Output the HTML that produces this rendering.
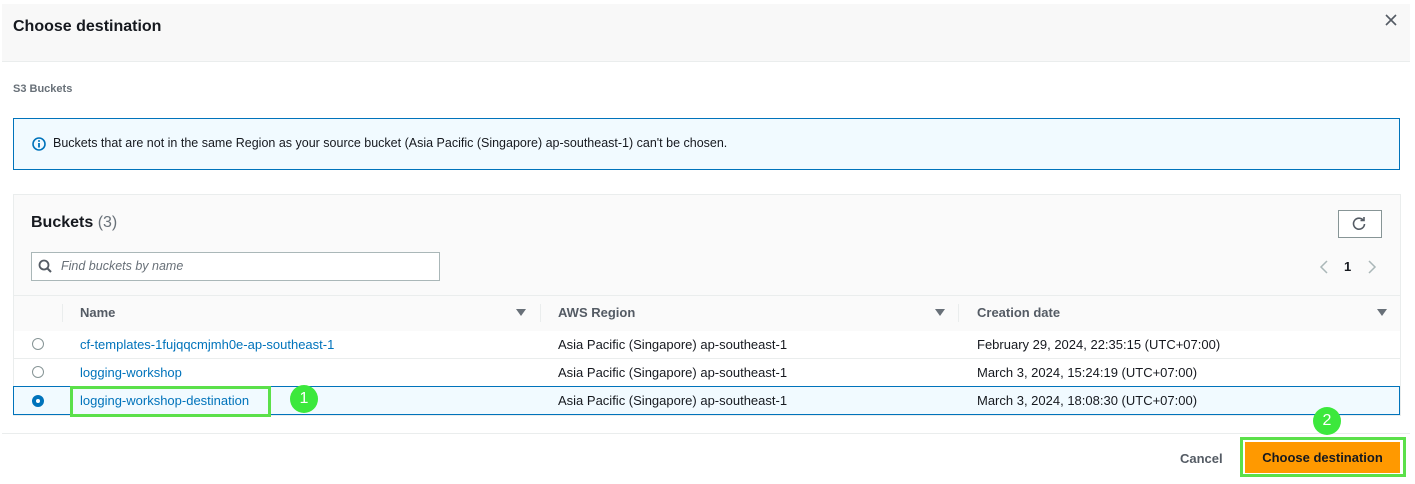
<!DOCTYPE html><html><head><style>
body{margin:0;width:1415px;height:484px;background:#fff;font-family:"Liberation Sans",sans-serif;position:relative;overflow:hidden;color:#16191f}
.a{position:absolute}
.link{color:#0073bb;font-size:13px}
.t{font-size:13px}
.radio{width:10px;height:10px;border:1px solid #879596;border-radius:50%;background:#fff}
.tri{width:0;height:0;border-left:5px solid transparent;border-right:5px solid transparent;border-top:7px solid #687078}
</style></head><body>
<div class="a" style="left:2px;top:4px;width:1408px;height:57px;background:#f8f8f8;border-bottom:1px solid #eaeded"></div>
<div class="a" style="left:13px;top:18px;font-size:16px;font-weight:bold">Choose destination</div>
<svg class="a" style="left:1384px;top:13px" width="14" height="14"><path d="M2 2L12 12M12 2L2 12" stroke="#545b64" stroke-width="1.6"/></svg>
<div class="a" style="left:13px;top:83px;font-size:11px;font-weight:bold;color:#687078">S3 Buckets</div>
<div class="a" style="left:13px;top:118px;width:1385px;height:50px;background:#f1faff;border:1px solid #0073bb"></div>
<svg class="a" style="left:32px;top:137px" width="14" height="14"><circle cx="7" cy="7" r="6" fill="none" stroke="#0073bb" stroke-width="1.6"/><path d="M7 6v4.5" stroke="#0073bb" stroke-width="1.8"/><circle cx="7" cy="4" r="1" fill="#0073bb"/></svg>
<div class="a t" style="left:53px;top:136px;font-size:12.5px">Buckets that are not in the same Region as your source bucket (Asia Pacific (Singapore) ap-southeast-1) can't be chosen.</div>
<div class="a" style="left:13px;top:194px;width:1386px;height:220px;background:#fafafa;border:1px solid #eaeded"></div>
<div class="a" style="left:31px;top:214px;font-size:16px;font-weight:bold">Buckets <span style="font-weight:normal;color:#687078">(3)</span></div>
<div class="a" style="left:1338px;top:210px;width:42px;height:26px;border:1px solid #879596;background:#fff"></div>
<svg class="a" style="left:1351px;top:215px" width="16" height="16"><path d="M12.5 5.5A5.5 5.5 0 1 0 13.5 9" fill="none" stroke="#545b64" stroke-width="1.6"/><path d="M9.5 5.5h3.5V2" fill="none" stroke="#545b64" stroke-width="1.6"/></svg>
<div class="a" style="left:31px;top:252px;width:407px;height:27px;border:1px solid #aab7b8;background:#fff"></div>
<svg class="a" style="left:38px;top:259px" width="14" height="14"><circle cx="6" cy="6" r="4.5" fill="none" stroke="#545b64" stroke-width="1.8"/><path d="M9 9l4 4" stroke="#545b64" stroke-width="2"/></svg>
<div class="a t" style="left:61px;top:259px;font-style:italic;color:#687078;font-size:12.5px">Find buckets by name</div>
<svg class="a" style="left:1318px;top:259px" width="64" height="16"><path d="M9 2L3 8l6 6" fill="none" stroke="#aab7b8" stroke-width="1.5"/><path d="M51 2l6 6-6 6" fill="none" stroke="#aab7b8" stroke-width="1.5"/></svg>
<div class="a t" style="left:1344px;top:259px;font-weight:bold">1</div>
<div class="a" style="left:14px;top:295px;width:1386px;height:35px;border-top:1px solid #eaeded;border-bottom:1px solid #eaeded"></div>
<div class="a" style="left:62px;top:304px;width:1px;height:18px;background:#eaeded"></div>
<div class="a" style="left:540px;top:304px;width:1px;height:18px;background:#eaeded"></div>
<div class="a" style="left:958px;top:304px;width:1px;height:18px;background:#eaeded"></div>
<div class="a t" style="left:80px;top:305px;font-weight:bold;color:#545b64">Name</div>
<div class="a t" style="left:558px;top:305px;font-weight:bold;color:#545b64">AWS Region</div>
<div class="a t" style="left:977px;top:305px;font-weight:bold;color:#545b64">Creation date</div>
<div class="a tri" style="left:516px;top:309px"></div>
<div class="a tri" style="left:935px;top:309px"></div>
<div class="a tri" style="left:1377px;top:309px"></div>
<div class="a" style="left:14px;top:331px;width:1386px;height:27px;background:#fff;border-bottom:1px solid #eaeded"></div>
<div class="a" style="left:14px;top:359px;width:1386px;height:27px;background:#fff"></div>
<div class="a" style="left:13px;top:386px;width:1385px;height:27px;background:#f1faff;border:1px solid #0073bb"></div>
<div class="a radio" style="left:32px;top:338px"></div>
<div class="a radio" style="left:32px;top:366px"></div>
<div class="a" style="left:32px;top:395px;width:4px;height:4px;border:4px solid #0073bb;border-radius:50%;background:#fff"></div>
<div class="a link" style="left:80px;top:337px">cf-templates-1fujqqcmjmh0e-ap-southeast-1</div>
<div class="a link" style="left:80px;top:365px">logging-workshop</div>
<div class="a link" style="left:80px;top:393px">logging-workshop-destination</div>
<div class="a" style="left:70px;top:386px;width:201px;height:31px;border:3px solid #5be04a;box-sizing:border-box"></div>
<div class="a" style="left:290px;top:385px;width:28px;height:28px;border-radius:50%;background:#3ce83c;color:#fff;text-align:center;line-height:28px;font-size:16px">1</div>
<div class="a t" style="left:558px;top:337px">Asia Pacific (Singapore) ap-southeast-1</div>
<div class="a t" style="left:558px;top:365px">Asia Pacific (Singapore) ap-southeast-1</div>
<div class="a t" style="left:558px;top:393px">Asia Pacific (Singapore) ap-southeast-1</div>
<div class="a t" style="left:977px;top:337px">February 29, 2024, 22:35:15 (UTC+07:00)</div>
<div class="a t" style="left:977px;top:365px">March 3, 2024, 15:24:19 (UTC+07:00)</div>
<div class="a t" style="left:977px;top:393px">March 3, 2024, 18:08:30 (UTC+07:00)</div>
<div class="a" style="left:2px;top:433px;width:1408px;height:1px;background:#eaeded"></div>
<div class="a t" style="left:1180px;top:451px;font-weight:bold;color:#545b64">Cancel</div>
<div class="a" style="left:1240px;top:437px;width:166px;height:40px;border:3px solid #5be04a;box-sizing:border-box"></div>
<div class="a" style="left:1245px;top:442px;width:155px;height:31px;background:#ff9900;text-align:center;line-height:31px;font-size:13px;font-weight:bold">Choose destination</div>
<div class="a" style="left:1313px;top:407px;width:28px;height:28px;border-radius:50%;background:#3ce83c;color:#fff;text-align:center;line-height:28px;font-size:16px">2</div>
</body></html>
